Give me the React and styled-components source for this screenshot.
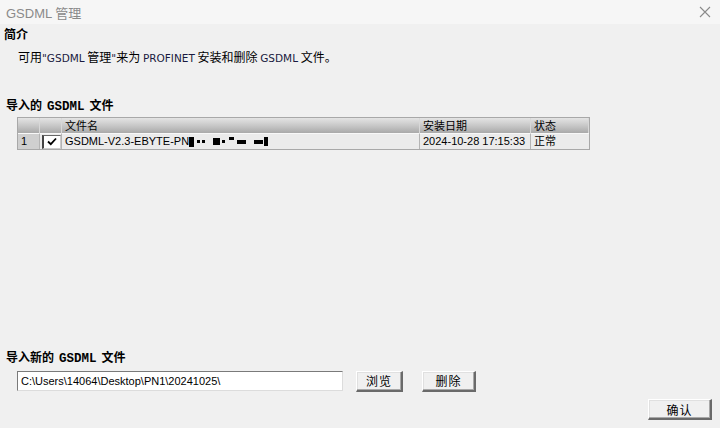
import React from 'react';
import styled, { createGlobalStyle } from 'styled-components';

const GlobalStyle = createGlobalStyle`
	html, body {
		margin: 0;
		padding: 0;
		background: #f0f0f0;
	}
	body {
		font-family: 'Liberation Sans', 'Noto Sans CJK SC', sans-serif;
		font-size: 12px;
		color: #000;
	}
`;

const Window = styled.div`
	width: 720px;
	height: 428px;
	display: flex;
	flex-direction: column;
	background: #f0f0f0;
	overflow: hidden;
`;

const TitleBar = styled.div`
	height: 24px;
	flex: none;
	display: flex;
	align-items: center;
	justify-content: space-between;
	padding: 0 6px;
	background: #f6f6f6;
	color: #8a8a8a;
	font-size: 13px;
`;

const Close = styled.div`
	width: 14px;
	height: 14px;
	margin-right: 2px;
	color: #8a8a8a;
`;

const Body = styled.div`
	flex: 1;
	display: flex;
	flex-direction: column;
	padding: 0 8px 0 4px;
`;

const Heading = styled.div`
	font-weight: bold;
	font-size: 12px;
	font-family: 'Noto Sans CJK SC', sans-serif;
	padding-left: ${(p) => p.indent || 0}px;
	margin-top: ${(p) => p.top || 0}px;
	height: 18px;
	line-height: 18px;
	b {
		font-family: 'Liberation Mono', monospace;
		font-size: 12.5px;
		margin: 0 5px;
	}
`;

const Intro = styled.div`
	margin: 5px 0 0 14px;
	height: 18px;
	line-height: 18px;
	font-family: 'Noto Sans CJK SC', sans-serif;
	font-size: 12px;
	span {
		font-family: 'DejaVu Sans', sans-serif;
		font-size: 10.5px;
		color: #1a1a40;
	}
`;

const Table = styled.div`
	margin: 3px 0 0 13px;
	width: 571px;
	border: 1px solid #a8a8a8;
	display: grid;
	grid-template-columns: 22px 22px 358px 111px 1fr;
	background: #f0f0f0;
`;

const HeadCell = styled.div`
	height: 15px;
	line-height: 15px;
	padding-left: 3px;
	background: linear-gradient(to bottom, #e4e4e4 0%, #c8c8c8 50%, #a9a9a9 100%);
	border-right: 1px solid #d8d8d8;
	font-family: 'Noto Sans CJK SC', sans-serif;
	font-size: 11px;
	&:last-child {
		border-right: none;
	}
`;

const Cell = styled.div`
	height: 15px;
	line-height: 15px;
	padding-left: ${(p) => (p.pad === undefined ? 3 : p.pad)}px;
	background: ${(p) => (p.dark ? '#cfcfcf' : '#ebebeb')};
	border-top: 1px solid #f8f8f8;
	border-right: 1px solid #b4b4b4;
	font-size: 11px;
	font-family: 'Liberation Sans', 'Noto Sans CJK SC', sans-serif;
	white-space: nowrap;
	overflow: hidden;
	display: flex;
	align-items: center;
	&:last-child {
		border-right: none;
	}
`;

const CheckBox = styled.div`
	width: 16px;
	height: 12px;
	margin-left: 1px;
	background: #fff;
	border-left: 2px solid #444;
	border-top: 1px solid #666;
	border-right: 1px solid #ccc;
	border-bottom: 1px solid #ccc;
	display: flex;
	align-items: center;
	justify-content: center;
`;

const Redact = styled.span`
	display: inline-block;
	background: #000;
	width: ${(p) => p.w}px;
	height: ${(p) => p.h}px;
	margin-left: ${(p) => p.ml}px;
	align-self: ${(p) => (p.top ? 'flex-start' : 'center')};
	margin-top: ${(p) => (p.top ? 3 : 0)}px;
`;

const Spacer = styled.div`
	flex: 1;
`;

const ImportRow = styled.div`
	display: flex;
	align-items: center;
	margin: 5px 0 0 13px;
	height: 20px;
`;

const PathInput = styled.div`
	width: 321px;
	height: 18px;
	line-height: 18px;
	background: #fff;
	border-top: 1px solid #7a7a7a;
	border-left: 1px solid #7a7a7a;
	border-right: 1px solid #dcdcdc;
	border-bottom: 1px solid #dcdcdc;
	padding-left: 3px;
	font-size: 11px;
	font-family: 'Liberation Sans', sans-serif;
`;

const Button = styled.div`
	width: ${(p) => p.w}px;
	height: 18px;
	margin-left: ${(p) => p.ml}px;
	display: flex;
	align-items: center;
	justify-content: center;
	background: #f0f0f0;
	border-top: 1px solid #fff;
	border-left: 1px solid #fff;
	border-right: 2px solid #6a6a6a;
	border-bottom: 2px solid #6a6a6a;
	box-shadow: inset -1px -1px 0 #a8a8a8, inset 1px 1px 0 #e0e0e0;
	font-family: 'Noto Sans CJK SC', sans-serif;
	font-size: 12px;
	letter-spacing: 1px;
`;

const Footer = styled.div`
	display: flex;
	justify-content: flex-end;
	padding: 8px 0 8px 0;
`;

function Check() {
	return (
		<svg width="10" height="9" viewBox="0 0 10 9">
			<path d="M1 4.5 L3.8 7.2 L9 1.5" stroke="#000" strokeWidth="1.8" fill="none" />
		</svg>
	);
}

export default function App() {
	return (
		<Window>
			<GlobalStyle />
			<TitleBar>
				<span>GSDML 管理</span>
				<Close>
					<svg width="14" height="14" viewBox="0 0 14 14">
						<path d="M2 2 L12 12 M12 2 L2 12" stroke="#8a8a8a" strokeWidth="1.1" />
					</svg>
				</Close>
			</TitleBar>
			<Body>
				<Heading top={1}>简介</Heading>
				<Intro>
					可用<span>"GSDML</span> 管理<span>"</span>来为 <span>PROFINET</span> 安装和删除 <span>GSDML</span> 文件。
				</Intro>
				<Heading top={30} indent={2}>
					导入的<b>GSDML</b>文件
				</Heading>
				<Table>
					<HeadCell />
					<HeadCell />
					<HeadCell>文件名</HeadCell>
					<HeadCell>安装日期</HeadCell>
					<HeadCell>状态</HeadCell>
					<Cell dark>1</Cell>
					<Cell pad={1}>
						<CheckBox>
							<Check />
						</CheckBox>
					</Cell>
					<Cell>
						GSDML-V2.3-EBYTE-PN
						<Redact w={5} h={10} ml={0} />
						<Redact w={3} h={3} ml={3} />
						<Redact w={3} h={3} ml={2} />
						<Redact w={7} h={7} ml={8} />
						<Redact w={3} h={3} ml={2} />
						<Redact w={5} h={3} ml={4} top />
						<Redact w={9} h={4} ml={3} />
						<Redact w={9} h={4} ml={8} />
						<Redact w={4} h={9} ml={1} />
					</Cell>
					<Cell>2024-10-28 17:15:33</Cell>
					<Cell>正常</Cell>
				</Table>
				<Spacer />
				<Heading indent={2}>
					导入新的<b>GSDML</b>文件
				</Heading>
				<ImportRow>
					<PathInput>C:\Users\14064\Desktop\PN1\20241025\</PathInput>
					<Button w={44} ml={13}>浏览</Button>
					<Button w={51} ml={19}>删除</Button>
				</ImportRow>
				<Footer>
					<Button w={61} ml={0}>确认</Button>
				</Footer>
			</Body>
		</Window>
	);
}
